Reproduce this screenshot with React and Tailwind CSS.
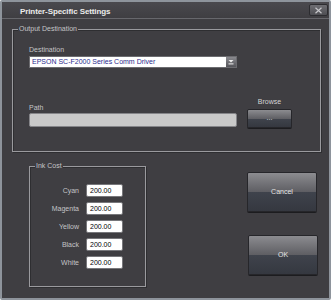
import React from 'react';

const font = { fontFamily: '"Liberation Sans", Arial, sans-serif' };

function Btn({ label, className }) {
  return (
    <div className={`flex flex-col rounded-[2px] border border-[#26262a] shadow-[0_1px_0_#1c1c1f] overflow-hidden ${className}`}>
      <div className="flex-1 bg-gradient-to-b from-[#8c8c90] to-[#5e5e63]" />
      <div className="flex-1 bg-gradient-to-b from-[#3f434c] to-[#353840]" />
      <span className="absolute inset-0 flex items-center justify-center text-[7px] text-[#e4e4e4]">{label}</span>
    </div>
  );
}

function Group({ title, className, children }) {
  return (
    <div className={`relative border border-[#9a9a9e] shadow-[inset_1px_1px_0_#2e2e31,1px_1px_0_#2e2e31] ${className}`}>
      <span className="absolute -top-[6px] left-[5px] bg-[#3f3e42] px-[1px] text-[7px] leading-[10px] text-[#c4c4c6]">{title}</span>
      {children}
    </div>
  );
}

const inks = ['Cyan', 'Magenta', 'Yellow', 'Black', 'White'];

export default function App() {
  return (
    <div style={font} className="w-[331px] h-[300px] bg-[#3f3e42] border-2 border-[#8e949c] rounded-[2px] flex flex-col">
      <div className="h-[17px] flex items-start justify-between border-b border-[#67676c] bg-gradient-to-b from-[#4a494e] to-[#3f3e42] pl-[18px] pr-[1px]">
        <span className="mt-[5px] text-[8px] leading-[10px] font-bold text-[#ececec] tracking-[-0.1px]">Printer-Specific Settings</span>
        <div className="w-[19px] h-[12px] mt-[2px] rounded-[2px] border border-[#2c2c30] bg-gradient-to-b from-[#6e6e73] to-[#4e4e53] flex items-center justify-center">
          <svg width="9" height="7" viewBox="0 0 9 7">
            <path d="M1.5 0.8 L7.5 6.2 M7.5 0.8 L1.5 6.2" stroke="#c8c8cc" strokeWidth="1.2" />
          </svg>
        </div>
      </div>

      <Group title="Output Destination" className="ml-[10px] mt-[10px] w-[309px] h-[123px] pl-[16px] pt-[14px]">
        <div className="text-[7px] leading-[11px] text-[#c4c4c6]">Destination</div>
        <div className="mt-[1px] w-[208px] h-[12px] flex border border-[#6c6c70] bg-white">
          <span className="flex-1 pl-[2px] text-[7px] leading-[10px] text-[#2c2c8e]">EPSON SC-F2000 Series Comm Driver</span>
          <div className="w-[10px] bg-gradient-to-b from-[#8a8a8f] to-[#55555a] flex items-center justify-center">
            <svg width="6" height="6" viewBox="0 0 6 6">
              <path d="M0.5 1 L5.5 1 L3 3.6 Z" fill="#f0f0f0" />
              <rect x="0.5" y="4.4" width="5" height="1" fill="#f0f0f0" />
            </svg>
          </div>
        </div>
        <div className="mt-[28px] flex items-end">
          <div className="w-[208px] mb-[1px]">
            <div className="text-[7px] leading-[10px] text-[#c4c4c6]">Path</div>
            <div className="h-[14px] rounded-[2px] border border-[#858589] bg-[#c9c9c9]" />
          </div>
          <div className="ml-[10px] w-[45px] flex flex-col items-center">
            <div className="text-[7px] leading-[11px] text-[#d4d4d6]">Browse</div>
            <Btn label="..." className="relative mt-[2px] w-[45px] h-[19px]" />
          </div>
        </div>
      </Group>

      <div className="flex items-start">
        <Group title="Ink Cost" className="ml-[27px] mt-[14px] w-[117px] h-[121px] pt-[17px]">
          <div className="grid grid-cols-[49px_37px] gap-x-[7px] gap-y-[5px]">
            {inks.map((ink) => (
              <React.Fragment key={ink}>
                <span className="text-right text-[7px] leading-[13px] text-[#c4c4c6]">{ink}</span>
                <div className="h-[13px] rounded-[2px] border border-[#77777b] bg-white pl-[3px] text-[7px] leading-[11px] text-black">200.00</div>
              </React.Fragment>
            ))}
          </div>
        </Group>
        <div className="ml-[101px] mt-[20px] flex flex-col">
          <Btn label="Cancel" className="relative w-[70px] h-[40px]" />
          <Btn label="OK" className="relative mt-[23px] ml-[1px] w-[70px] h-[40px]" />
        </div>
      </div>
    </div>
  );
}
